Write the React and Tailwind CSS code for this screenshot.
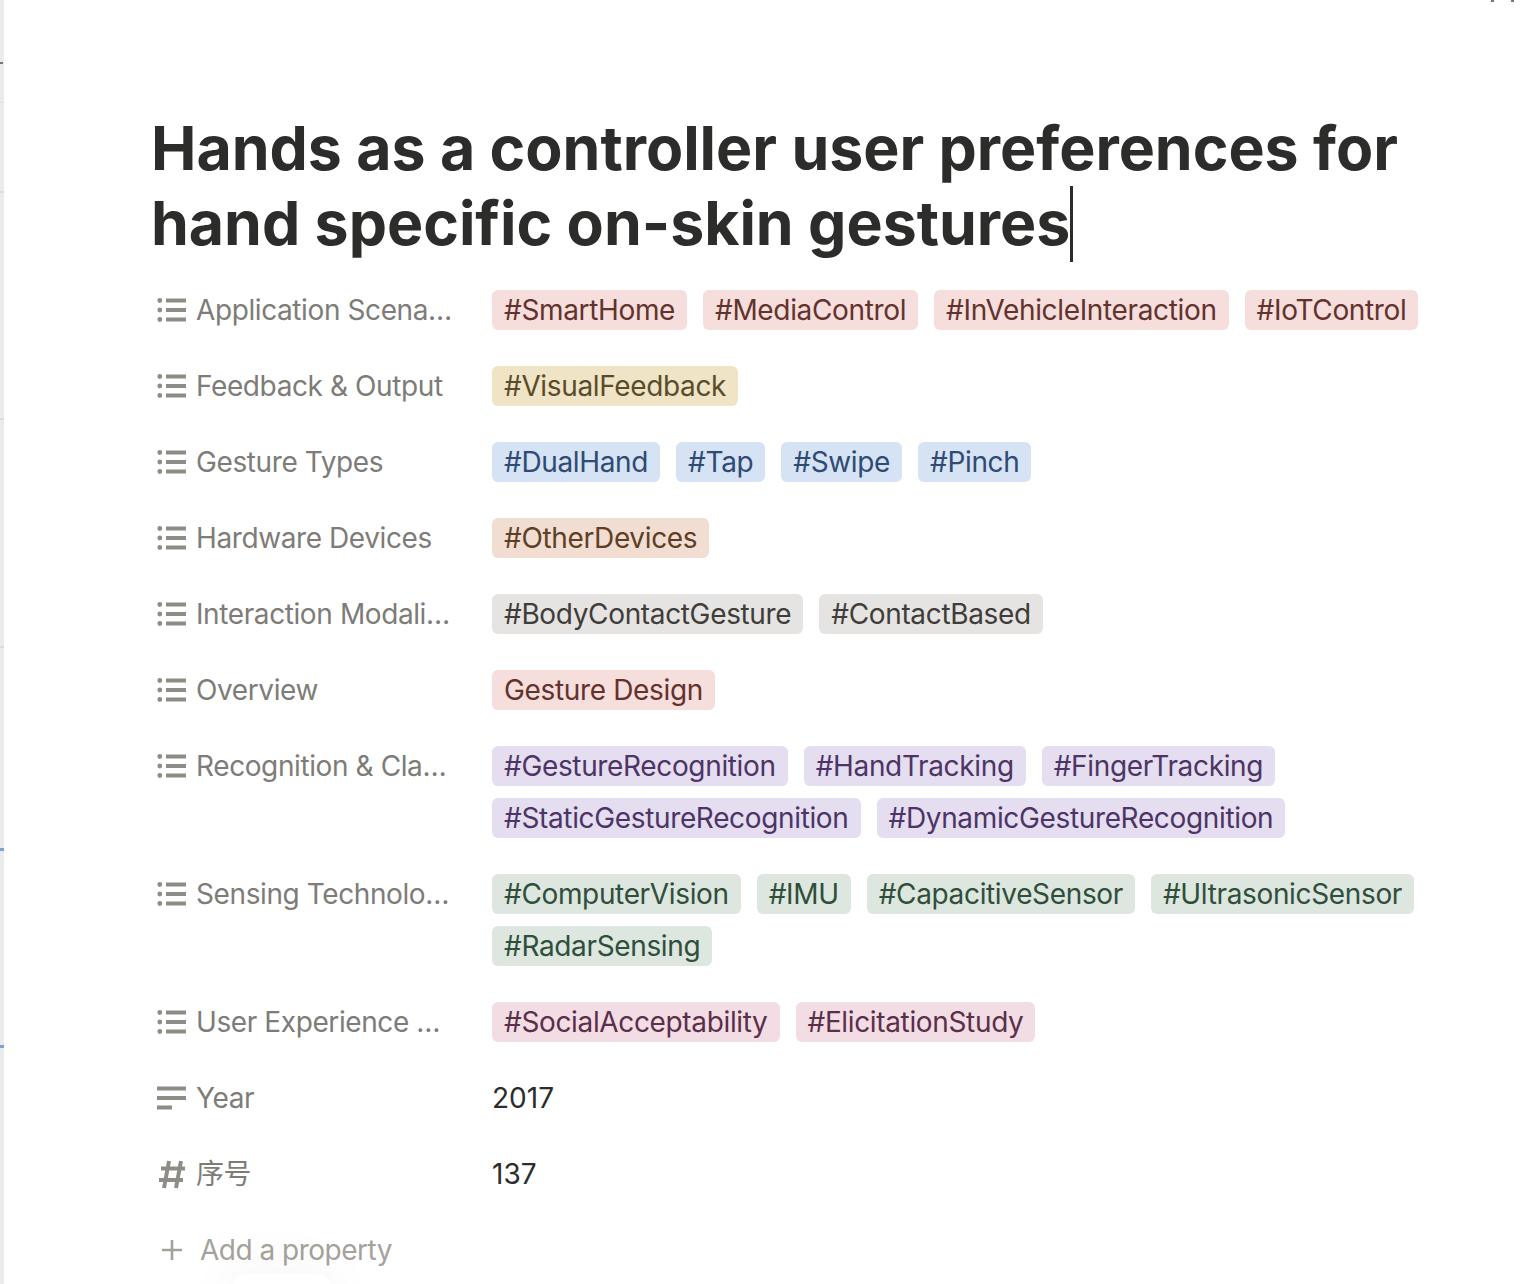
const rows = [
  { label: "Application Scena…", color: "red", tags: [["#SmartHome", "#MediaControl", "#InVehicleInteraction", "#IoTControl"]] },
  { label: "Feedback & Output", color: "yellow", tags: [["#VisualFeedback"]] },
  { label: "Gesture Types", color: "blue", tags: [["#DualHand", "#Tap", "#Swipe", "#Pinch"]] },
  { label: "Hardware Devices", color: "brown", tags: [["#OtherDevices"]] },
  { label: "Interaction Modali…", color: "gray", tags: [["#BodyContactGesture", "#ContactBased"]] },
  { label: "Overview", color: "red", tags: [["Gesture Design"]] },
  { label: "Recognition & Cla…", color: "purple", tags: [["#GestureRecognition", "#HandTracking", "#FingerTracking"], ["#StaticGestureRecognition", "#DynamicGestureRecognition"]] },
  { label: "Sensing Technolo…", color: "green", tags: [["#ComputerVision", "#IMU", "#CapacitiveSensor", "#UltrasonicSensor"], ["#RadarSensing"]] },
  { label: "User Experience …", color: "pink", tags: [["#SocialAcceptability", "#ElicitationStudy"]] },
];

const tagColors = {
  red: "bg-[#f5dedc] text-[#63322c]",
  yellow: "bg-[#efe4c6] text-[#5a4c2a]",
  blue: "bg-[#d5e3f5] text-[#2f4a73]",
  brown: "bg-[#f1ddd1] text-[#5e3f26]",
  gray: "bg-[#e5e4e2] text-[#3f3d39]",
  purple: "bg-[#e5ddf0] text-[#4c3566]",
  green: "bg-[#dde6df] text-[#2f4f3a]",
  pink: "bg-[#f3dde5] text-[#5a2f4a]",
};

function ListIcon() {
  return (
    <svg width="30" height="24" viewBox="0 0 30 24" className="shrink-0 text-[#8d8c85]" fill="currentColor">
      <circle cx="2.8" cy="2.5" r="2.4" />
      <circle cx="2.8" cy="12" r="2.4" />
      <circle cx="2.8" cy="21.5" r="2.4" />
      <rect x="9" y="0.5" width="20" height="4" />
      <rect x="9" y="10" width="20" height="4" />
      <rect x="9" y="19.5" width="20" height="4" />
    </svg>
  );
}

function TextIcon() {
  return (
    <svg width="30" height="24" viewBox="0 0 30 24" className="shrink-0 text-[#8d8c85]" fill="currentColor">
      <rect x="0" y="0.5" width="29" height="4" />
      <rect x="0" y="10" width="29" height="4" />
      <rect x="0" y="19.5" width="15" height="4" />
    </svg>
  );
}

function HashIcon() {
  return (
    <svg width="30" height="30" viewBox="0 0 30 30" className="shrink-0 text-[#8d8c85]" fill="none" stroke="currentColor" strokeWidth="4">
      <path d="M12 2 7 29M24 2l-5 27M4 9.5h24M2 21h24" />
    </svg>
  );
}

function PropRow({ icon, label, children }) {
  return (
    <div className="flex items-start">
      <div className="flex h-10 w-[340px] shrink-0 items-center gap-[9px] pl-[5px] text-[28px] tracking-[-0.4px] text-[#7d7c78]">
        {icon}
        <span className="whitespace-nowrap">{label}</span>
      </div>
      {children}
    </div>
  );
}

export default function App() {
  return (
    <div className="relative h-[1284px] w-[1520px] overflow-hidden bg-white font-['Inter','Noto_Sans_CJK_SC',sans-serif]">
      {/* window edge on the left */}
      <div className="absolute bottom-0 left-0 top-0 w-[4px] bg-[#ebebeb]" />
      <div className="absolute left-0 top-[62px] h-[2px] w-[3px] bg-[#777777]" />
      <div className="absolute left-0 top-[102px] h-px w-[4px] bg-[#dddddd]" />
      <div className="absolute left-0 top-[191px] h-[2px] w-[4px] bg-[#dddddd]" />
      <div className="absolute left-0 top-[418px] h-[2px] w-[4px] bg-[#dddddd]" />
      <div className="absolute left-0 top-[646px] h-[2px] w-[4px] bg-[#dddddd]" />
      <div className="absolute left-0 top-[848px] h-[3px] w-[4px] bg-[#7ba3db]" />
      <div className="absolute left-0 top-[1045px] h-[3px] w-[4px] bg-[#7ba3db]" />
      {/* clipped marks at the top right */}
      <div className="absolute left-[1491px] top-0 h-[2px] w-[3px] bg-[#777777]" />
      <div className="absolute left-[1511px] top-0 h-[2px] w-[3px] bg-[#777777]" />

      <div className="pl-[152px] pt-[111px]">
        <h1 className="-ml-px w-[1300px] text-[60.8px] font-bold leading-[75px] tracking-[-0.02px] text-[#2c2c2b]">
          Hands as a controller user preferences for
          <br />
          hand specific on-skin gestures
          <span className="inline-block h-[76px] w-[3px] bg-[#2c2c2b] align-[-17px]" />
        </h1>

        <div className="mt-[28px] flex flex-col gap-9">
          {rows.map((row) => (
            <PropRow key={row.label} icon={<ListIcon />} label={row.label}>
              <div className="flex flex-col gap-3">
                {row.tags.map((line, i) => (
                  <div key={i} className="flex gap-4">
                    {line.map((tag) => (
                      <span
                        key={tag}
                        className={`flex h-10 items-center whitespace-nowrap rounded-[6px] px-3 text-[28px] tracking-[-0.35px] ${tagColors[row.color]}`}
                      >
                        {tag}
                      </span>
                    ))}
                  </div>
                ))}
              </div>
            </PropRow>
          ))}
          <PropRow icon={<TextIcon />} label="Year">
            <span className="flex h-10 items-center text-[28px] text-[#2c2c2b]">2017</span>
          </PropRow>
          <PropRow icon={<HashIcon />} label="序号">
            <span className="flex h-10 items-center text-[28px] text-[#2c2c2b]">137</span>
          </PropRow>
          <div className="flex h-10 items-center gap-[17px] pl-[9px] text-[28px] tracking-[-0.5px] text-[#a5a29b]">
            <svg width="22" height="22" viewBox="0 0 22 22" fill="none" stroke="currentColor" strokeWidth="2.6">
              <path d="M11 1v20M1 11h20" />
            </svg>
            <span>Add a property</span>
          </div>
        </div>
      </div>

      {/* floating pill cut off at the bottom */}
      <div className="absolute -bottom-[30px] left-[232px] h-10 w-[100px] rounded-[16px] bg-white shadow-[0_0_60px_rgba(0,0,0,0.06)]" />
    </div>
  );
}
